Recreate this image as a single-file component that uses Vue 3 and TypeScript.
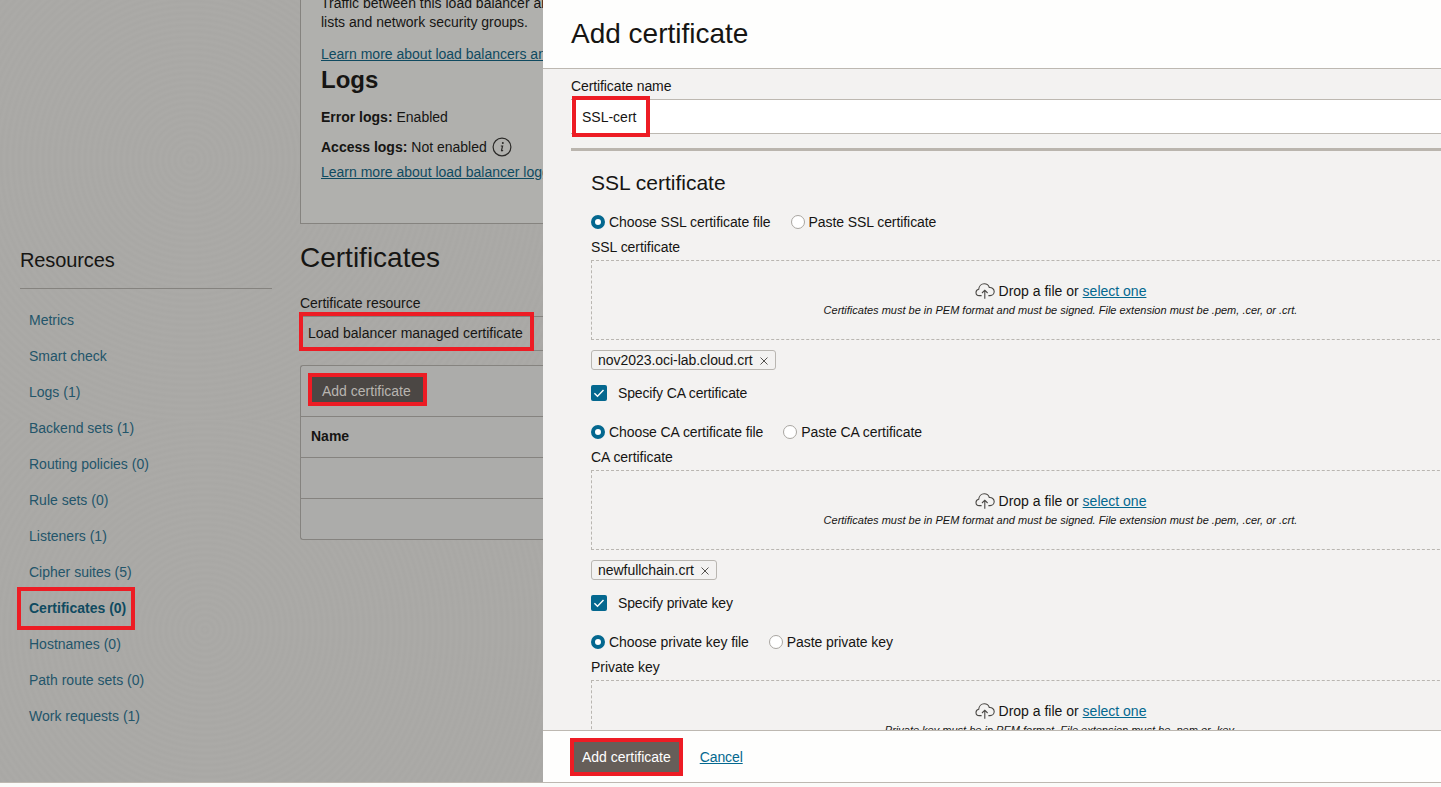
<template>
  <div class="page">
    <div class="backdrop">
      <aside class="resources">
        <h2>Resources</h2>
        <ul>
          <li v-for="item in resources" :key="item.label">
            <a :class="{ active: item.active }">{{ item.label }}</a>
          </li>
        </ul>
      </aside>

      <main class="content">
        <section class="info-box">
          <p class="cut-line">Traffic between this load balancer and its backends is controlled by security</p>
          <p>lists and network security groups.</p>
          <a class="learn first">Learn more about load balancers and network security</a>
          <h3>Logs</h3>
          <p class="log-line"><b>Error logs:</b> Enabled</p>
          <p class="log-line access">
            <span><b>Access logs:</b> Not enabled</span>
            <svg class="info-icon" viewBox="0 0 20 20" width="20" height="20" aria-hidden="true">
              <circle cx="10" cy="10" r="8.9" fill="none" stroke="#2b2a28" stroke-width="1.2" />
              <circle cx="10.8" cy="6" r="1" fill="#2b2a28" />
              <path d="M8.8 9h1.8l-1.1 4.4c-.1.6.5.7 1.5-.2" fill="none" stroke="#2b2a28" stroke-width="1.2" />
            </svg>
          </p>
          <a class="learn">Learn more about load balancer logging and monitoring</a>
        </section>

        <h1>Certificates</h1>
        <label class="res-label">Certificate resource</label>
        <div class="res-select"><span class="mark">Load balancer managed certificate</span></div>

        <section class="cert-table">
          <div class="table-tools"><button class="btn dim mark">Add certificate</button></div>
          <div class="table-row head">Name</div>
          <div class="table-row"></div>
          <div class="table-row last"></div>
        </section>
      </main>
    </div>

    <div class="drawer">
      <header class="drawer-head">Add certificate</header>
      <div class="drawer-body">
        <label class="name-label">Certificate name</label>
        <div class="name-input"><span class="mark">SSL-cert</span></div>
        <section class="ssl">
          <h2>SSL certificate</h2>
          <div v-for="block in blocks" :key="block.title" class="block">
            <div class="radios">
              <span class="radio on"></span><span class="radio-text first-opt">{{ block.choose }}</span>
              <span class="radio"></span><span class="radio-text">{{ block.paste }}</span>
            </div>
            <div class="field-label">{{ block.title }}</div>
            <div class="dropzone">
              <div class="drop-main">
                <svg viewBox="0 0 20 16" width="20" height="16" fill="none" stroke="#4a4845" stroke-width="1.1" aria-hidden="true">
                  <path d="M6.6 12.6H4.3C2.4 12.6 1 11.2 1 9.4c0-1.6 1.1-2.9 2.7-3.2C4 3.2 6.3.8 9.2.8c2.4 0 4.4 1.5 5.1 3.7 2.6-.3 4.9 1.5 4.9 4 0 2.3-1.8 4.1-4.1 4.1h-1.7" />
                  <path d="M9.8 15.8V7.2M7 10l2.8-2.8 2.8 2.8" />
                </svg>
                <span>Drop a file or <a>select one</a></span>
              </div>
              <div class="drop-hint">{{ block.hint }}</div>
            </div>
            <template v-if="block.file">
              <div class="file-tag">
                <span>{{ block.file }}</span>
                <svg class="tag-x" viewBox="0 0 8 8" width="8" height="8" aria-hidden="true">
                  <path d="M.5.5l7 7M7.5.5l-7 7" fill="none" stroke="#55524f" stroke-width="1" />
                </svg>
              </div>
              <div class="check-row">
                <span class="checkbox">
                  <svg viewBox="0 0 16 16" width="16" height="16" aria-hidden="true">
                    <path d="M3.4 8.2l3.1 3.1 6-6.4" fill="none" stroke="#fff" stroke-width="1.4" />
                  </svg>
                </span>
                <span>{{ block.next }}</span>
              </div>
            </template>
          </div>
        </section>
      </div>
      <footer class="drawer-foot">
        <button class="btn strong mark">Add certificate</button>
        <a class="cancel">Cancel</a>
      </footer>
    </div>
  </div>
</template>

<script setup lang="ts">
interface ResourceItem {
  label: string;
  active?: boolean;
}

interface CertBlock {
  title: string;
  choose: string;
  paste: string;
  hint: string;
  file?: string;
  next?: string;
}

const pemHint = "Certificates must be in PEM format and must be signed. File extension must be .pem, .cer, or .crt.";

const resources: ResourceItem[] = [
  { label: "Metrics" },
  { label: "Smart check" },
  { label: "Logs (1)" },
  { label: "Backend sets (1)" },
  { label: "Routing policies (0)" },
  { label: "Rule sets (0)" },
  { label: "Listeners (1)" },
  { label: "Cipher suites (5)" },
  { label: "Certificates (0)", active: true },
  { label: "Hostnames (0)" },
  { label: "Path route sets (0)" },
  { label: "Work requests (1)" },
];

const blocks: CertBlock[] = [
  {
    title: "SSL certificate",
    choose: "Choose SSL certificate file",
    paste: "Paste SSL certificate",
    hint: pemHint,
    file: "nov2023.oci-lab.cloud.crt",
    next: "Specify CA certificate",
  },
  {
    title: "CA certificate",
    choose: "Choose CA certificate file",
    paste: "Paste CA certificate",
    hint: pemHint,
    file: "newfullchain.crt",
    next: "Specify private key",
  },
  {
    title: "Private key",
    choose: "Choose private key file",
    paste: "Paste private key",
    hint: "Private key must be in PEM format. File extension must be .pem or .key.",
  },
];
</script>

<style>
html,
body {
  margin: 0;
  background: #fbfbf9;
  overflow: hidden;
}
</style>

<style scoped>
.page {
  display: flex;
  height: 783px;
  box-sizing: border-box;
  border-bottom: 1px solid #bdb8b1;
  font-family: "Liberation Sans", Arial, sans-serif;
  font-size: 14px;
  color: #161513;
  overflow: hidden;
}

.backdrop {
  flex: 0 0 543px;
  display: flex;
  overflow: hidden;
  background-color: #abaaa7;
  background-repeat: no-repeat;
  background-size: 543px 420px, 543px 362px;
  background-position: 0 0, 0 420px;
  background-image:
    repeating-radial-gradient(circle at 190px 160px, transparent 0, rgba(0, 0, 0, 0.014) 3px, transparent 6px),
    repeating-radial-gradient(circle at 205px 210px, transparent 0, rgba(0, 0, 0, 0.014) 3px, transparent 6px);
}

.resources {
  flex: 0 0 252px;
  margin-left: 20px;
  padding-top: 248px;
}

.resources h2 {
  margin: 0;
  padding-bottom: 16px;
  border-bottom: 1px solid #85837f;
  font-size: 20px;
  line-height: 24px;
  font-weight: 400;
  letter-spacing: -0.1px;
}

.resources ul {
  list-style: none;
  margin: 13px 0 0;
  padding: 0;
}

.resources li {
  height: 36px;
  display: flex;
  align-items: center;
}

.resources a {
  margin-left: 9px;
  color: #23556a;
}

.resources a.active {
  margin-left: 1px;
  padding: 9px 5px 10px 8px;
  color: #0f4a60;
  font-weight: 700;
  outline: 4px solid #ed1c24;
}

.content {
  flex: 0 0 243px;
  margin-left: 28px;
  min-width: 0;
}

.info-box {
  box-sizing: border-box;
  width: 260px;
  height: 224px;
  padding: 0 0 0 20px;
  background: #b0b0ad;
  border-left: 1px solid #85837f;
  border-bottom: 1px solid #85837f;
  white-space: nowrap;
  overflow: hidden;
}

.info-box p {
  margin: 0;
  line-height: 19px;
}

.info-box .cut-line {
  margin-top: -6px;
}

.learn {
  display: block;
  color: #0f4a60;
  text-decoration: underline;
  line-height: 18px;
}

.learn.first {
  margin-top: 13px;
}

.info-box h3 {
  margin: 2px 0 0;
  font-size: 24px;
  line-height: 30px;
}

.info-box .log-line {
  margin-top: 13px;
}

.info-box .log-line.access {
  display: flex;
  align-items: center;
  gap: 5px;
  margin-top: 10px;
  height: 20px;
}

.info-icon {
  flex: none;
}

.log-line.access + .learn {
  margin-top: 6px;
}

.content h1 {
  margin: 17px 0 0;
  font-size: 28px;
  line-height: 34px;
  font-weight: 400;
}

.res-label {
  display: block;
  margin-top: 19px;
  line-height: 18px;
  letter-spacing: -0.05px;
}

.res-select {
  box-sizing: border-box;
  width: 300px;
  height: 35px;
  margin-top: 4px;
  border-top: 1px solid #85837f;
  border-bottom: 1px solid #85837f;
}

.res-select .mark {
  display: inline-block;
  box-sizing: border-box;
  margin: -1px 0 0 3px;
  padding: 0 7px 0 5px;
  height: 31px;
  line-height: 35px;
  white-space: nowrap;
  vertical-align: top;
}

.mark {
  outline: 4px solid #ed1c24;
}

.cert-table {
  box-sizing: border-box;
  width: 300px;
  margin-top: 14px;
  background: #acacaa;
  border: 1px solid #85837f;
  border-right: none;
  border-radius: 3px 0 0 3px;
}

.table-tools {
  height: 50px;
  padding: 11px 0 0 11px;
  box-sizing: border-box;
}

.btn {
  display: block;
  border: none;
  border-radius: 0;
  font: inherit;
  white-space: nowrap;
}

.btn.dim {
  height: 25px;
  padding: 2px 12px 0 10px;
  background: #4b4744;
  color: #b8b5b0;
  line-height: 25px;
}

.btn.strong {
  height: 30px;
  padding: 1px 8px 0;
  background: #665e59;
  color: #fff;
  line-height: 29px;
}

.table-row {
  height: 40px;
  border-top: 1px solid #85837f;
  padding-left: 10px;
  line-height: 38px;
}

.table-row.head {
  font-weight: 700;
}

.drawer {
  flex: 1;
  min-width: 0;
  display: flex;
  flex-direction: column;
  background: #f3f2f1;
}

.drawer-head {
  box-sizing: border-box;
  height: 69px;
  padding: 18px 0 0 28px;
  background: #fefefd;
  border-bottom: 1px solid #bdb8b1;
  font-size: 28px;
  line-height: 32px;
}

.drawer-body {
  flex: 1;
  min-height: 0;
  padding-left: 28px;
  overflow: hidden;
}

.name-label {
  display: block;
  margin-top: 9px;
  line-height: 17px;
  letter-spacing: -0.1px;
}

.name-input {
  height: 33px;
  margin-top: 4px;
  background: #fff;
  border-top: 1px solid #bdb8b1;
  border-bottom: 1px solid #bdb8b1;
  display: flex;
  align-items: center;
}

.name-input .mark {
  margin-left: 5px;
  padding: 0 10px 0 6px;
  height: 33px;
  line-height: 35px;
}

.ssl {
  margin-top: 14px;
  padding: 20px 0 0 20px;
  border-top: 3px solid #bab5ae;
  width: 939px;
}

.ssl h2 {
  margin: 0 0 18px;
  font-size: 21px;
  line-height: 24px;
  font-weight: 400;
}

.radios {
  display: flex;
  align-items: center;
  height: 18px;
}

.radio {
  box-sizing: border-box;
  width: 14px;
  height: 14px;
  margin-right: 4px;
  border: 1px solid #a9a6a1;
  border-radius: 50%;
  background: #fff;
}

.radio.on {
  border: 4.5px solid #04688f;
}

.radio-text {
  line-height: 18px;
  letter-spacing: -0.08px;
}

.first-opt {
  margin-right: 20px;
}

.field-label {
  margin-top: 7px;
  line-height: 18px;
  letter-spacing: -0.05px;
}

.dropzone {
  box-sizing: border-box;
  height: 80px;
  margin-top: 4px;
  padding-top: 20px;
  border: 1px dashed #b9b6b1;
  text-align: center;
}

.drop-main {
  display: flex;
  justify-content: center;
  align-items: center;
  gap: 4px;
  height: 20px;
}

.drop-main a {
  color: #04688f;
  text-decoration: underline;
}

.drop-hint {
  margin-top: 1px;
  font-size: 11px;
  font-style: italic;
  line-height: 16px;
}

.file-tag {
  box-sizing: border-box;
  display: flex;
  align-items: center;
  width: fit-content;
  height: 20px;
  margin-top: 10px;
  padding: 0 7px 0 6px;
  border: 1px solid #b9b6b1;
  border-radius: 3px;
  line-height: 18px;
  letter-spacing: -0.04px;
}

.tag-x {
  margin: 1px 0 0 7px;
  flex: none;
}

.check-row {
  display: flex;
  align-items: center;
  height: 18px;
  margin-top: 14px;
  margin-bottom: 21px;
  letter-spacing: -0.14px;
}

.checkbox {
  width: 16px;
  height: 16px;
  margin-right: 11px;
  border-radius: 2px;
  background: #04688f;
  display: flex;
}

.drawer-foot {
  box-sizing: border-box;
  height: 52px;
  padding: 1px 0 0 31px;
  background: #fefefd;
  border-top: 1px solid #bdb8b1;
  display: flex;
  align-items: center;
  gap: 21px;
}

.cancel {
  color: #04688f;
  text-decoration: underline;
  letter-spacing: -0.1px;
}
</style>
